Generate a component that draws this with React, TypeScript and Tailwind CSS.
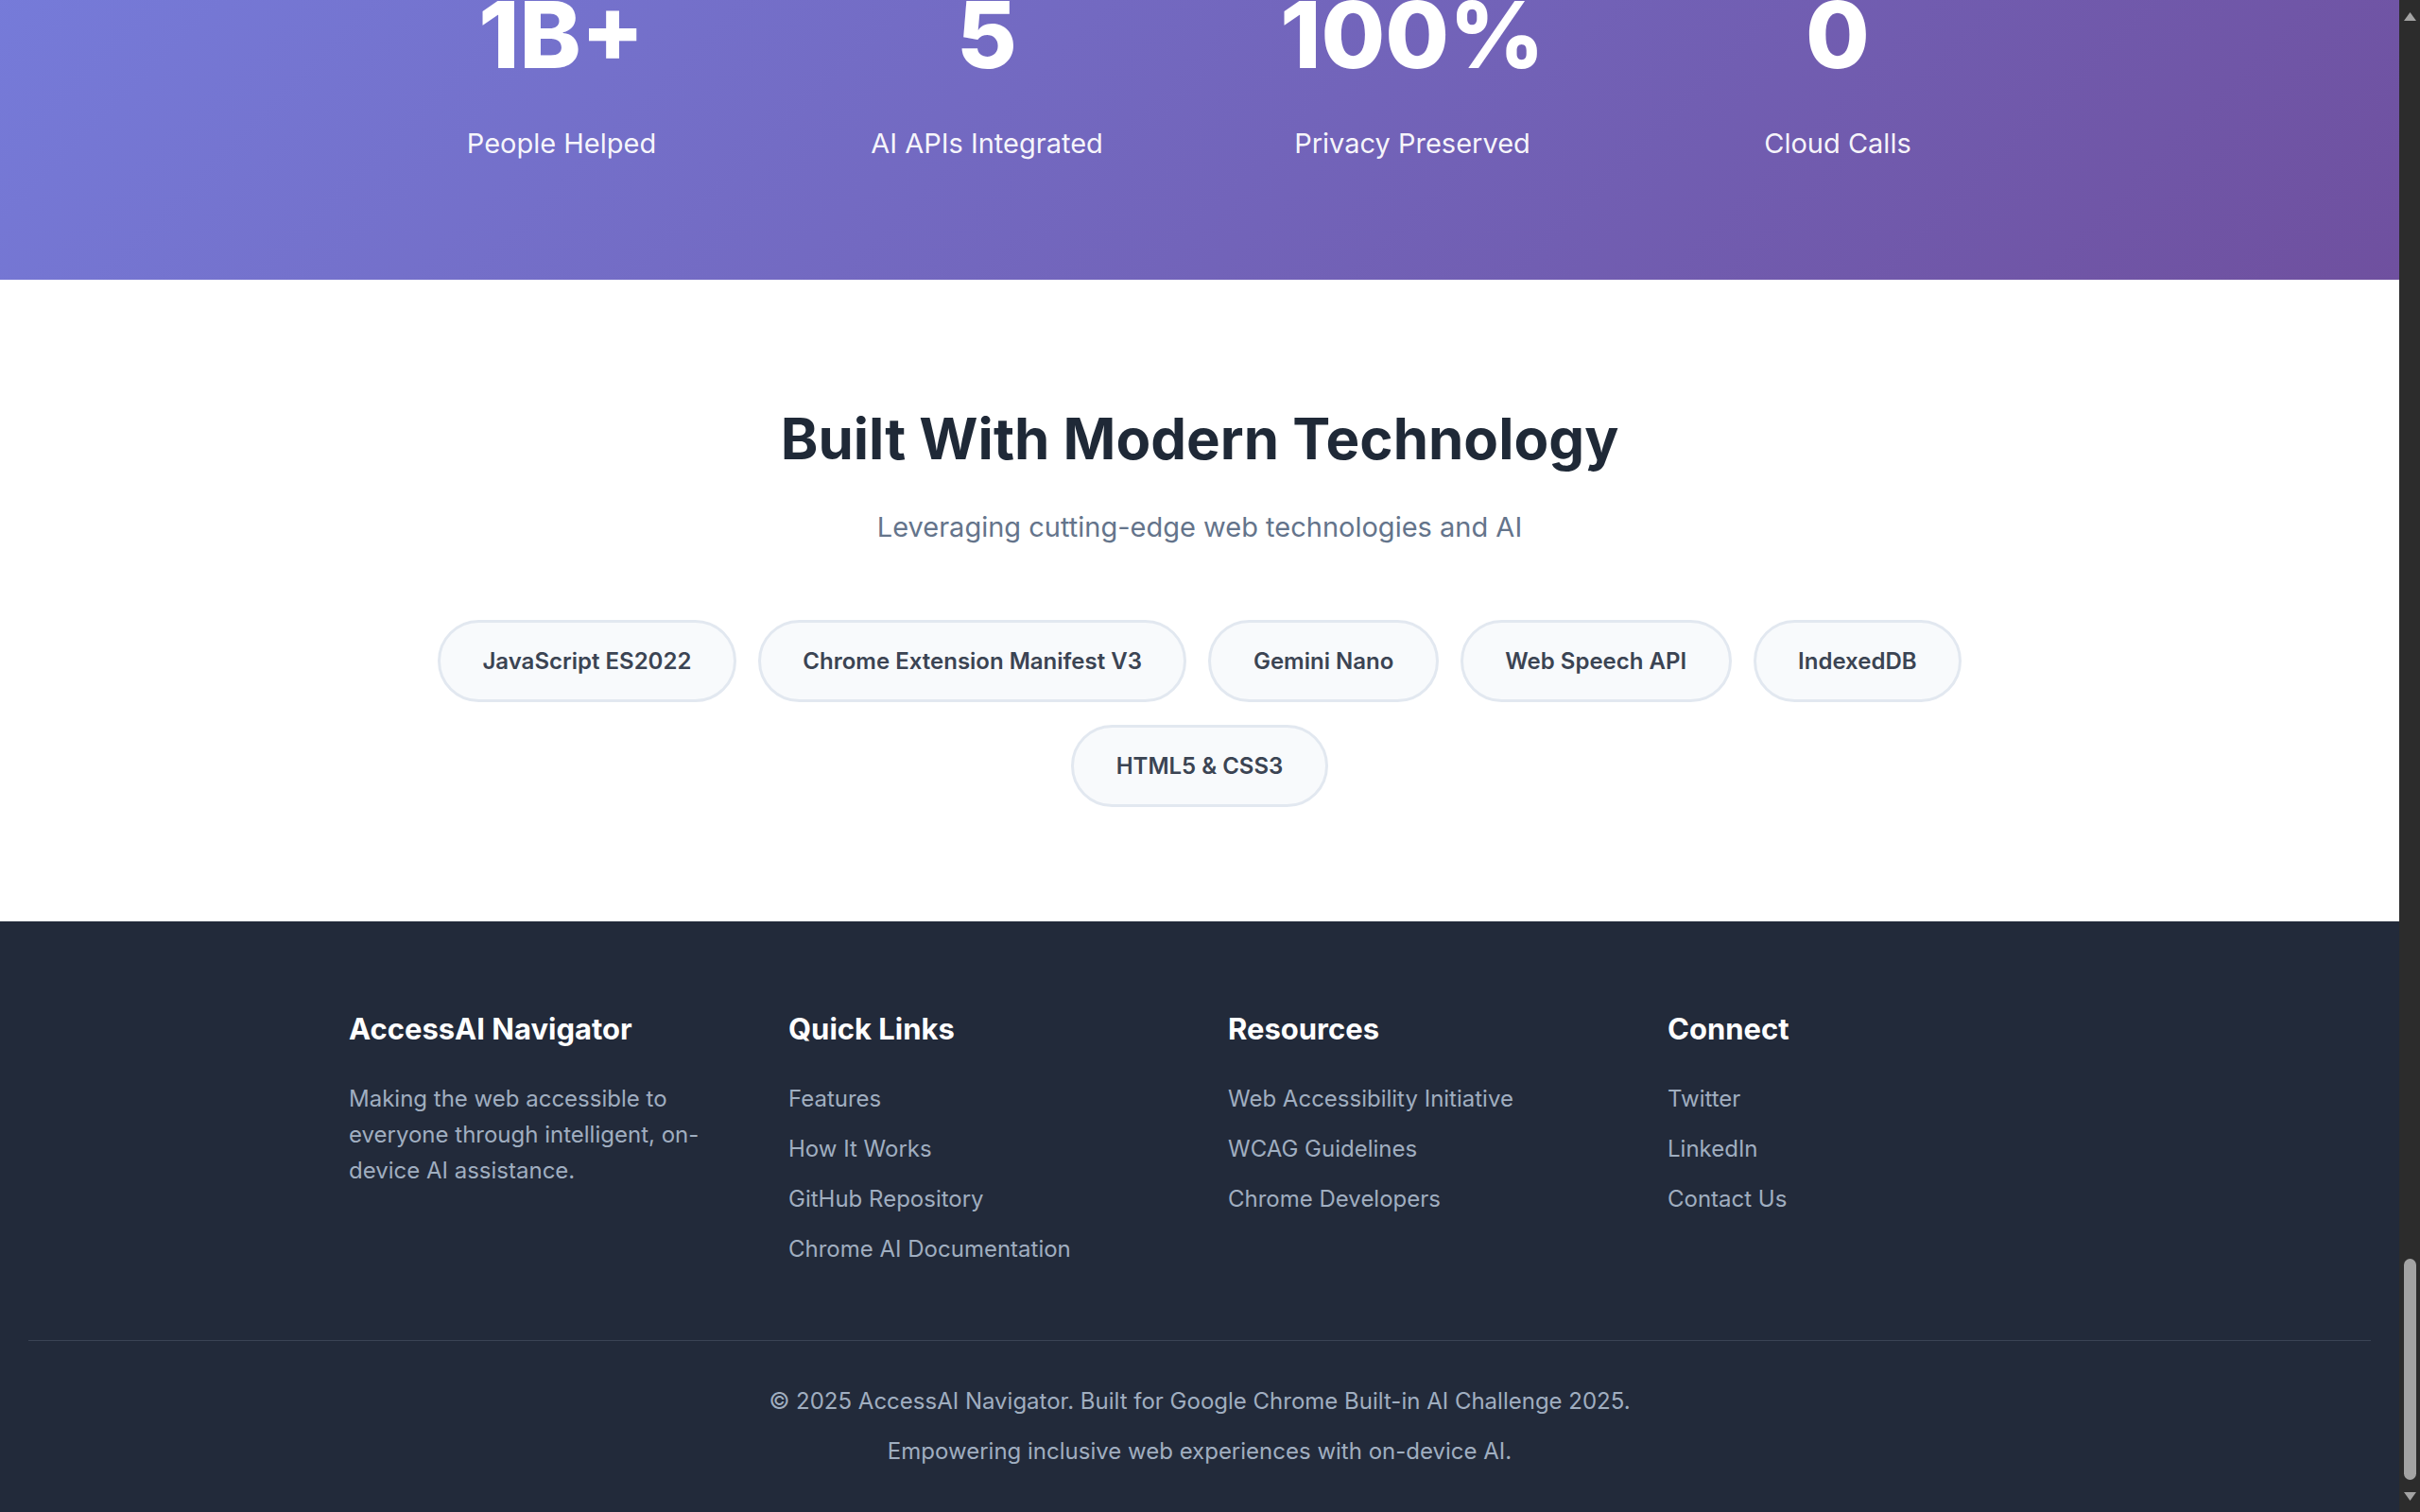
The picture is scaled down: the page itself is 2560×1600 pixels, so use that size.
import React from "react";

type Stat = {
  value: string;
  label: string;
};

type FooterColumn = {
  title: string;
  links: string[];
};

const stats: Stat[] = [
  { value: "1B+", label: "People Helped" },
  { value: "5", label: "AI APIs Integrated" },
  { value: "100%", label: "Privacy Preserved" },
  { value: "0", label: "Cloud Calls" },
];

const techs = [
  "JavaScript ES2022",
  "Chrome Extension Manifest V3",
  "Gemini Nano",
  "Web Speech API",
  "IndexedDB",
  "HTML5 & CSS3",
];

const footerColumns: FooterColumn[] = [
  {
    title: "Quick Links",
    links: ["Features", "How It Works", "GitHub Repository", "Chrome AI Documentation"],
  },
  {
    title: "Resources",
    links: ["Web Accessibility Initiative", "WCAG Guidelines", "Chrome Developers"],
  },
  {
    title: "Connect",
    links: ["Twitter", "LinkedIn", "Contact Us"],
  },
];

const StatsSection = () => {
  return (
    <section className="shrink-0 bg-[linear-gradient(135deg,#767ddc_0%,#6f509f_100%)] pt-[130px] pb-[127px] text-white">
      <div className="mx-auto grid w-[1800px] grid-cols-4 text-center">
        {stats.map((stat) => (
          <div key={stat.label} className="flex flex-col items-center">
            <div className="mb-[38px] text-[98px] font-extrabold leading-[1.2]">{stat.value}</div>
            <div className="text-[29px] leading-[35px] text-white/95">{stat.label}</div>
          </div>
        ))}
      </div>
    </section>
  );
};

const TechSection = () => {
  return (
    <section className="shrink-0 bg-white pt-[133px] pb-[121px] text-center">
      <h2 className="text-[60px] font-bold leading-[71px] text-[#1f2937]">
        Built With Modern Technology
      </h2>
      <p className="mt-[35px] text-[29px] leading-[46px] text-[#64748b]">
        Leveraging cutting-edge web technologies and AI
      </p>
      <div className="mx-auto mt-[75px] flex w-[1800px] flex-wrap justify-center gap-x-[23px] gap-y-[24px]">
        {techs.map((tech) => (
          <span
            key={tech}
            className="rounded-full border-[3px] border-[#e2e8f0] bg-[#f8fafc] px-[44.5px] py-[26px] text-[24px] font-semibold leading-[29px] text-[#3b4453]"
          >
            {tech}
          </span>
        ))}
      </div>
    </section>
  );
};

const Footer = () => {
  return (
    <footer className="shrink-0 bg-[#222a3a] pt-[96px] text-[#a0aec0]">
      <div className="mx-auto grid w-[1800px] grid-cols-4 gap-x-[60px]">
        <div>
          <h3 className="mb-[37px] text-[31px] font-bold leading-[36px] text-white">
            AccessAI Navigator
          </h3>
          <p className="text-[24px] leading-[38px]">
            Making the web accessible to everyone through intelligent, on-device AI assistance.
          </p>
        </div>
        {footerColumns.map((col) => (
          <div key={col.title}>
            <h3 className="mb-[37px] text-[31px] font-bold leading-[36px] text-white">{col.title}</h3>
            <ul className="flex flex-col gap-[15px]">
              {col.links.map((link) => (
                <li key={link} className="text-[24px] leading-[38px]">
                  {link}
                </li>
              ))}
            </ul>
          </div>
        ))}
      </div>
      <div className="mx-[30px] mt-[77px] border-t border-[#3a4354] pt-[45px] pb-[46px] text-center text-[24px] leading-[37px]">
        <p>© 2025 AccessAI Navigator. Built for Google Chrome Built-in AI Challenge 2025.</p>
        <p className="mt-[16px]">Empowering inclusive web experiences with on-device AI.</p>
      </div>
    </footer>
  );
};

const Scrollbar = () => {
  return (
    <div className="flex w-[22px] shrink-0 flex-col items-center bg-[#2c2c2c] pt-[12px] pb-[11px]">
      <svg width="15" height="11" viewBox="0 0 15 11">
        <path d="M7.5 1 L14 10 L1 10 Z" fill="#a3a3a3" />
      </svg>
      <div className="flex-1" />
      <div className="h-[234px] w-[13px] rounded-full bg-[#a3a3a3]" />
      <svg className="mt-[12px]" width="15" height="11" viewBox="0 0 15 11">
        <path d="M1 1 L14 1 L7.5 10 Z" fill="#a3a3a3" />
      </svg>
    </div>
  );
};

const App = () => {
  return (
    <div className="flex h-screen w-full overflow-hidden bg-white font-['Inter','Noto_Sans',sans-serif]">
      <div className="flex min-w-0 flex-1 flex-col justify-end overflow-hidden">
        <StatsSection />
        <TechSection />
        <Footer />
      </div>
      <Scrollbar />
    </div>
  );
};

export default App;
